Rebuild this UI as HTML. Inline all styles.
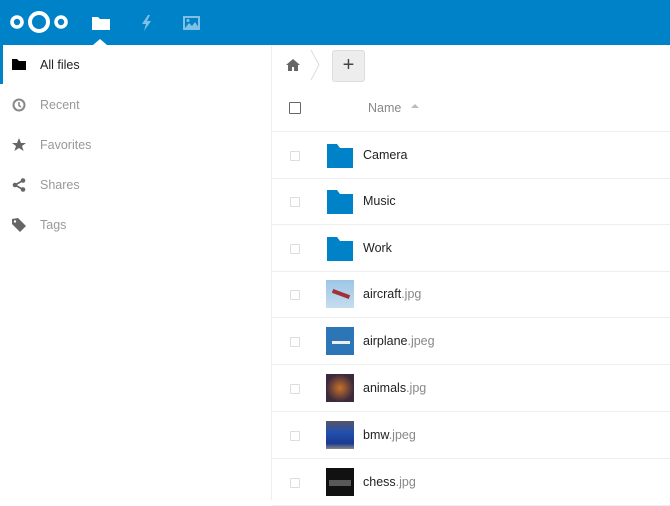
<!DOCTYPE html>
<html><head><style>
*{margin:0;padding:0;box-sizing:border-box}
body{width:670px;height:500px;overflow:hidden;background:#fff;font-family:"Liberation Sans",sans-serif;font-size:12.5px;position:relative}
#hdr{position:absolute;left:0;top:0;width:670px;height:45px;background:#0082c9}
#side{position:absolute;left:0;top:45px;width:272px;height:455px;border-right:1px solid #eee}
.nav{position:absolute;left:0;height:40px;width:271px}
.nav span{position:absolute;left:40px;top:13px;color:#999}
.nav svg{position:absolute;left:12px;top:13px}
#active{position:absolute;left:0;top:45px;width:3px;height:39px;background:#0082c9}
.row{position:absolute;left:272px;width:398px;height:47px;border-bottom:1px solid #eee}
.cb{position:absolute;left:18px;top:19px;width:10px;height:10px;border:1px solid #ddd;border-radius:1px}
.nm{position:absolute;left:91px;top:16px;color:#222}
.nm i{font-style:normal;color:#888}
.ic{position:absolute;left:54px;top:9px;width:28px;height:28px}
</style></head><body>
<div id="hdr">
<svg width="60" height="26" style="position:absolute;left:9px;top:9px" viewBox="0 0 60 26"><circle cx="8" cy="13" r="5" fill="none" stroke="#fff" stroke-width="3.6"/><circle cx="30" cy="13" r="9" fill="none" stroke="#fff" stroke-width="4"/><circle cx="52" cy="13" r="5" fill="none" stroke="#fff" stroke-width="3.6"/></svg>
<svg width="18" height="14" style="position:absolute;left:92px;top:16px" viewBox="0 0 18 14"><path d="M0 1h6l2 2h10v11H0z" fill="#fff"/></svg>
<svg width="10" height="16" style="position:absolute;left:142px;top:15px" viewBox="0 0 10 16"><path d="M6 0L0 9h4l-2 7 7-10H5l3-6z" fill="#7fc0e4"/></svg>
<svg width="17" height="14" style="position:absolute;left:183px;top:16px" viewBox="0 0 17 14"><rect x="1" y="1" width="15" height="12" fill="none" stroke="#7fc0e4" stroke-width="2"/><path d="M2 12l4-5 3 3 3-4 4 6z" fill="#7fc0e4"/><circle cx="5" cy="4.5" r="1.5" fill="#7fc0e4"/></svg>
<div style="position:absolute;left:93px;top:39px;width:0;height:0;border-left:7px solid transparent;border-right:7px solid transparent;border-bottom:6px solid #fff"></div>
</div>
<div id="side">
<div class="nav" style="top:0"><svg width="14" height="12" viewBox="0 0 14 12"><path d="M0 1h5l2 2h7v9H0z" fill="#000"/></svg><span style="color:#222">All files</span></div>
<div class="nav" style="top:40px"><svg width="14" height="14" viewBox="0 0 14 14"><circle cx="7" cy="7" r="5.5" fill="none" stroke="#888" stroke-width="2"/><path d="M7 4v3.5l2 1.5" stroke="#888" stroke-width="1.6" fill="none"/></svg><span>Recent</span></div>
<div class="nav" style="top:80px"><svg width="14" height="14" viewBox="0 0 14 14"><path d="M7 0l2 5h5l-4 3 1.6 5L7 10l-4.6 3L4 8 0 5h5z" fill="#666"/></svg><span>Favorites</span></div>
<div class="nav" style="top:120px"><svg width="14" height="14" viewBox="0 0 14 14"><circle cx="3" cy="7" r="2.3" fill="#666"/><circle cx="11" cy="2.5" r="2.3" fill="#666"/><circle cx="11" cy="11.5" r="2.3" fill="#666"/><path d="M3 7L11 2.5M3 7l8 4.5" stroke="#666" stroke-width="1.6"/></svg><span>Shares</span></div>
<div class="nav" style="top:160px"><svg width="14" height="14" viewBox="0 0 14 14"><path d="M0 1v5l8 8 6-6-8-8z" fill="#666"/><circle cx="3" cy="3.5" r="1.2" fill="#fff"/></svg><span>Tags</span></div>
</div>
<div id="active"></div>
<svg width="14" height="12" style="position:absolute;left:286px;top:59px" viewBox="0 0 14 12"><path d="M7 0L0 6h2v6h4V8h2v4h4V6h2z" fill="#666"/></svg>
<svg width="10" height="30" style="position:absolute;left:310px;top:50px" viewBox="0 0 10 30"><path d="M1 0l8 15-8 15" stroke="#ddd" fill="none"/></svg>
<div style="position:absolute;left:332px;top:50px;width:33px;height:32px;background:#ededed;border:1px solid #ddd;border-radius:3px;text-align:center;line-height:28px;font-size:20px;color:#444">+</div>
<div class="row" style="top:85px;height:47px"><div class="cb" style="border-color:#666;width:12px;height:12px;top:17px;left:17px"></div><span style="position:absolute;left:96px;top:16px;color:#888">Name</span><span style="position:absolute;left:139px;top:19px;width:0;height:0;border-left:4px solid transparent;border-right:4px solid transparent;border-bottom:4px solid #bbb"></span></div>
<div class="row" style="top:132px"><div class="cb"></div><svg class="ic" viewBox="0 0 28 28" style="top:10px"><path d="M1 2h10l3 4h13v20H1z" fill="#0082c9"/></svg><span class="nm">Camera</span></div>
<div class="row" style="top:178px"><div class="cb"></div><svg class="ic" viewBox="0 0 28 28" style="top:10px"><path d="M1 2h10l3 4h13v20H1z" fill="#0082c9"/></svg><span class="nm">Music</span></div>
<div class="row" style="top:225px"><div class="cb"></div><svg class="ic" viewBox="0 0 28 28" style="top:10px"><path d="M1 2h10l3 4h13v20H1z" fill="#0082c9"/></svg><span class="nm">Work</span></div>
<div class="row" style="top:271px"><div class="cb"></div><div class="ic" style="background:linear-gradient(#9cc6e6,#c7ddee)"><div style="position:absolute;left:6px;top:12px;width:18px;height:4px;background:#a0303a;transform:rotate(20deg)"></div></div><span class="nm">aircraft<i>.jpg</i></span></div>
<div class="row" style="top:318px"><div class="cb"></div><div class="ic" style="background:#2c76b8"><div style="position:absolute;left:6px;top:14px;width:18px;height:3px;background:#eee"></div></div><span class="nm">airplane<i>.jpeg</i></span></div>
<div class="row" style="top:365px"><div class="cb"></div><div class="ic" style="background:radial-gradient(circle at 50% 50%,#c8702a,#3a2a3c 70%)"></div><span class="nm">animals<i>.jpg</i></span></div>
<div class="row" style="top:412px"><div class="cb"></div><div class="ic" style="background:linear-gradient(#556,#2350b0 40%,#1a3a90 80%,#888)"></div><span class="nm">bmw<i>.jpeg</i></span></div>
<div class="row" style="top:459px"><div class="cb"></div><div class="ic" style="background:#111"><div style="position:absolute;left:3px;top:12px;width:22px;height:6px;background:#777;opacity:.7"></div></div><span class="nm">chess<i>.jpg</i></span></div>
</body></html>
